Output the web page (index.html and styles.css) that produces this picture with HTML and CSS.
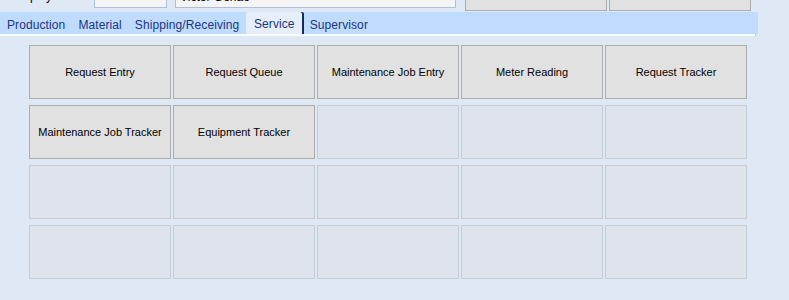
FILE: index.html
```html
<!DOCTYPE html>
<html>
<head>
<meta charset="utf-8">
<link rel="stylesheet" href="styles.css">
</head>
<body>
<div class="header">
  <div class="header-row">
    <span class="label">Employee ID:</span>
    <div class="field field-id"></div>
    <div class="field field-name">Victor Genao</div>
    <div class="hbtn"></div>
    <div class="hbtn"></div>
  </div>
</div>
<div class="tabs">
  <div class="tab">Production</div>
  <div class="tab">Material</div>
  <div class="tab">Shipping/Receiving</div>
  <div class="tab active">Service</div>
  <div class="tab">Supervisor</div>
</div>
<div class="tab-line"></div>
<div class="grid">
  <div class="btn">Request Entry</div>
  <div class="btn">Request Queue</div>
  <div class="btn">Maintenance Job Entry</div>
  <div class="btn">Meter Reading</div>
  <div class="btn">Request Tracker</div>
  <div class="btn">Maintenance Job Tracker</div>
  <div class="btn">Equipment Tracker</div>
  <div class="btn empty"></div>
  <div class="btn empty"></div>
  <div class="btn empty"></div>
  <div class="btn empty"></div>
  <div class="btn empty"></div>
  <div class="btn empty"></div>
  <div class="btn empty"></div>
  <div class="btn empty"></div>
  <div class="btn empty"></div>
  <div class="btn empty"></div>
  <div class="btn empty"></div>
  <div class="btn empty"></div>
  <div class="btn empty"></div>
</div>
</body>
</html>
```
FILE: styles.css
```css
html, body {
  margin: 0;
  padding: 0;
  background: #dfe8f5;
  font-family: "Liberation Sans", Arial, sans-serif;
  width: 789px;
  height: 300px;
  overflow: hidden;
}

.header {
  height: 12px;
  overflow: hidden;
}

.header-row {
  display: flex;
  align-items: flex-start;
  margin-top: -13px;
  padding-left: 12px;
}

.label {
  font-size: 12px;
  line-height: 14px;
  margin-top: 2px;
  width: 82px;
  color: #000;
}

.field {
  height: 19px;
  border: 1px solid #aebfdc;
  background: #f4f4f4;
  box-sizing: content-box;
  font-size: 12px;
  line-height: 19px;
  padding-left: 4px;
  color: #000;
}

.field-id {
  width: 67px;
  margin-right: 8px;
}

.field-name {
  width: 275px;
  margin-right: 9px;
}

.hbtn {
  width: 140px;
  height: 22px;
  background: #e1e1e1;
  border: 1px solid #adadad;
  margin-right: 2px;
}

.tabs {
  display: flex;
  align-items: stretch;
  gap: 1px;
  width: 758px;
  height: 22px;
  background: #bfdbff;
  padding-left: 1px;
  box-sizing: border-box;
}

.tab {
  box-sizing: border-box;
  height: 22px;
  padding: 2px 6px 0;
  font-size: 12px;
  line-height: 22px;
  color: #1a3682;
  letter-spacing: 0.1px;
}

.tab.active {
  background: #e6eefa;
  border-radius: 2px 2px 0 0;
  padding: 1px 7px 0 7.5px;
  box-shadow: 2px 0 0 #1b2a5c;
  margin-right: 1px;
}

.tab-line {
  width: 755px;
  height: 2px;
  background: #fafcff;
  border-right: 1px solid #c8c8c8;
}

.grid {
  display: grid;
  grid-template-columns: repeat(5, 142px);
  grid-auto-rows: 54px;
  column-gap: 2px;
  row-gap: 6px;
  margin: 9px 0 0 29px;
}

.btn {
  box-sizing: border-box;
  background: #e1e1e1;
  border: 1px solid #adadad;
  display: flex;
  align-items: center;
  justify-content: center;
  font-size: 11px;
  color: #000;
}

.btn.empty {
  background: #dfe3ec;
  border-color: #c6ccd4;
}
```
